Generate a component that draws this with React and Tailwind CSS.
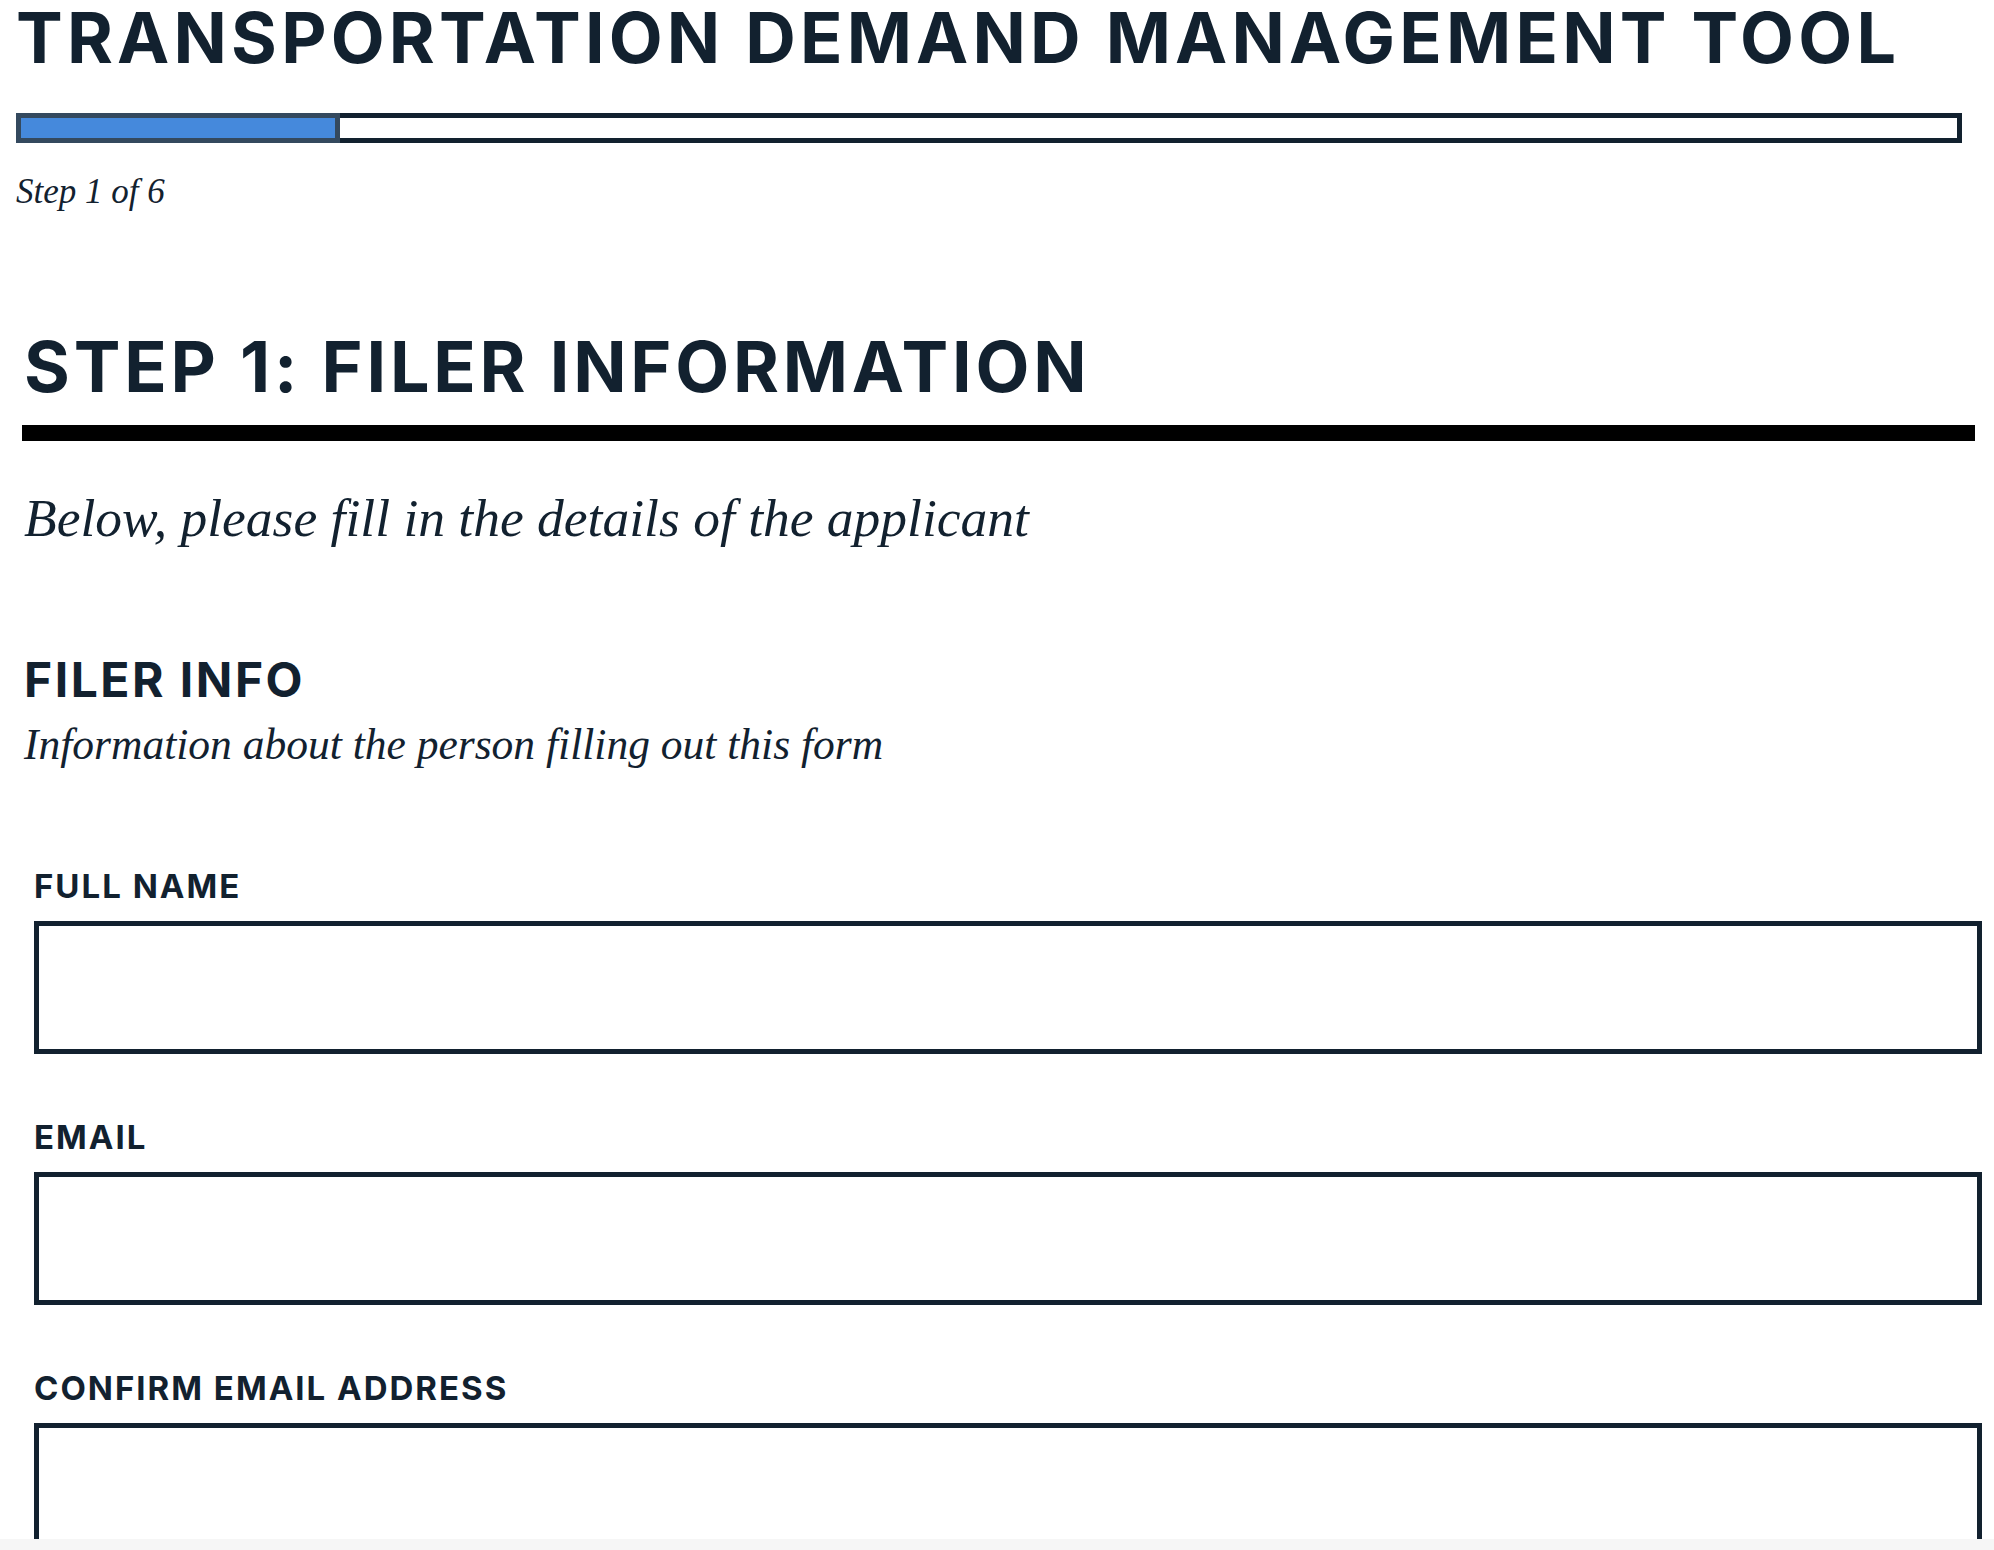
function Field({ label }) {
  return (
    <div className="flex flex-col">
      <label className="font-['Inter',sans-serif] text-[33px] font-bold leading-none tracking-[2px] text-[#12212f]">
        {label}
      </label>
      <input
        type="text"
        className="mt-[18px] h-[133px] w-full border-[5px] border-[#12212f] bg-white outline-none"
      />
    </div>
  );
}

function App() {
  const step = 1;
  const total = 6;

  return (
    <div className="min-h-screen bg-white pb-10 pt-[3px] text-[#12212f]">
      {/* header + progress */}
      <div className="ml-[16px] mr-[32px]">
        <h1 className="font-['Inter',sans-serif] text-[70px] font-bold leading-none tracking-[4.2px] whitespace-nowrap">
          TRANSPORTATION DEMAND MANAGEMENT TOOL
        </h1>
        <div className="mt-[40px] flex h-[30px]">
          <div className="w-[324px] border-[5px] border-[#34495e] bg-[#4589dc]" />
          <div className="flex-1 border-[5px] border-l-0 border-[#12212f] bg-white" />
        </div>
        <p className="mt-[31px] font-['Liberation_Serif',serif] text-[35px] italic leading-none">
          Step {step} of {total}
        </p>
      </div>

      {/* step section */}
      <div className="ml-[22px] mr-[19px] mt-[123px]">
        <h2 className="pl-[2px] font-['Inter',sans-serif] text-[70px] font-bold leading-none tracking-[3.8px]">
          STEP 1: FILER INFORMATION
        </h2>
        <div className="mt-[23px] h-[16px] bg-black" />
        <p className="mt-[51px] pl-[2px] font-['Liberation_Serif',serif] text-[53.5px] italic leading-none">
          Below, please fill in the details of the applicant
        </p>

        <h3 className="mt-[110px] pl-[2px] font-['Inter',sans-serif] text-[48px] font-bold leading-none tracking-[2.5px]">
          FILER INFO
        </h3>
        <p className="mt-[19px] pl-[2px] font-['Liberation_Serif',serif] text-[43.5px] italic leading-none">
          Information about the person filling out this form
        </p>
      </div>

      {/* fields */}
      <div className="ml-[34px] mr-[12px] mt-[104px] flex flex-col gap-[67px]">
        <Field label="FULL NAME" />
        <Field label="EMAIL" />
        <Field label="CONFIRM EMAIL ADDRESS" />
      </div>

      <div className="fixed inset-x-0 bottom-0 h-[11px] bg-[#f6f6f6]" />
    </div>
  );
}

export default App;
